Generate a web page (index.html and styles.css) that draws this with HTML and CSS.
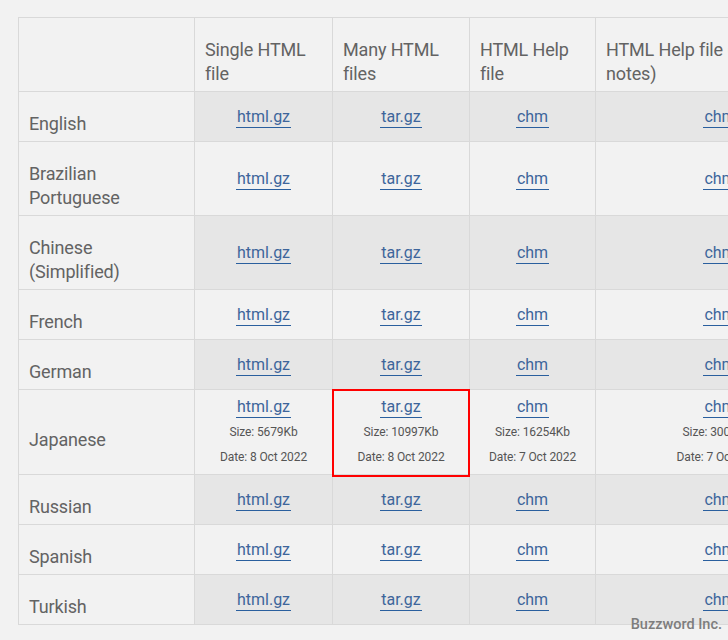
FILE: index.html
```html
<!DOCTYPE html>
<html lang="en">
<head>
<meta charset="utf-8">
<title>Documentation downloads</title>
<link rel="stylesheet" href="styles.css">
</head>
<body>
<div class="sheet">
<table class="docs">
<colgroup><col class="c-lang"><col class="c-single"><col class="c-many"><col class="c-help"><col class="c-notes"></colgroup>
<tr><th></th><th>Single HTML file</th><th>Many HTML files</th><th>HTML Help file</th><th>HTML Help file (with<br>notes)</th></tr>
<tr class="alt"><th>English</th><td><a href="#">html.gz</a></td><td><a href="#">tar.gz</a></td><td><a href="#">chm</a></td><td><a href="#">chm</a></td></tr>
<tr><th>Brazilian Portuguese</th><td><a href="#">html.gz</a></td><td><a href="#">tar.gz</a></td><td><a href="#">chm</a></td><td><a href="#">chm</a></td></tr>
<tr class="alt"><th>Chinese (Simplified)</th><td><a href="#">html.gz</a></td><td><a href="#">tar.gz</a></td><td><a href="#">chm</a></td><td><a href="#">chm</a></td></tr>
<tr><th>French</th><td><a href="#">html.gz</a></td><td><a href="#">tar.gz</a></td><td><a href="#">chm</a></td><td><a href="#">chm</a></td></tr>
<tr class="alt"><th>German</th><td><a href="#">html.gz</a></td><td><a href="#">tar.gz</a></td><td><a href="#">chm</a></td><td><a href="#">chm</a></td></tr>
<tr><th>Japanese</th>
<td><a href="#">html.gz</a><span class="meta">Size: 5679Kb</span><span class="meta">Date: 8 Oct 2022</span></td>
<td class="marked"><a href="#">tar.gz</a><span class="meta">Size: 10997Kb</span><span class="meta">Date: 8 Oct 2022</span></td>
<td><a href="#">chm</a><span class="meta">Size: 16254Kb</span><span class="meta">Date: 7 Oct 2022</span></td>
<td><a href="#">chm</a><span class="meta">Size: 30032Kb</span><span class="meta">Date: 7 Oct 2022</span></td></tr>
<tr class="alt"><th>Russian</th><td><a href="#">html.gz</a></td><td><a href="#">tar.gz</a></td><td><a href="#">chm</a></td><td><a href="#">chm</a></td></tr>
<tr><th>Spanish</th><td><a href="#">html.gz</a></td><td><a href="#">tar.gz</a></td><td><a href="#">chm</a></td><td><a href="#">chm</a></td></tr>
<tr class="alt"><th>Turkish</th><td><a href="#">html.gz</a></td><td><a href="#">tar.gz</a></td><td><a href="#">chm</a></td><td><a href="#">chm</a></td></tr>
</table>
</div>
<div class="watermark">Buzzword Inc.</div>
</body>
</html>
```
FILE: styles.css
```css
html, body { margin: 0; height: 640px; overflow: hidden; background: #f2f2f2; }
body { position: relative; width: 728px; font-family: Roboto, "Noto Sans", sans-serif; color: #636363; }
.sheet { padding: 17px 0 0 18px; width: 900px; }
.docs { border-collapse: collapse; table-layout: fixed; width: 826px; font-size: 18px; line-height: 24px; }
.c-lang { width: 176px; }
.c-single { width: 138px; }
.c-many { width: 137px; }
.c-help { width: 126px; }
.c-notes { width: 249px; }
.docs th, .docs td { border: 1px solid #d9d9d9; }
.docs th { padding: 20px 10px 5px; font-weight: 400; text-align: left; letter-spacing: -.15px; }
.docs td { padding: 5px 4px; font-size: 16px; text-align: center; vertical-align: middle; position: relative; }
.alt td { background: #e6e6e6; }
.docs a { color: #3d659b; text-decoration: none; border-bottom: 1px solid #2a5f9e; padding: 0 1px 1px; }
.meta { display: block; height: 25px; font-size: 12px; line-height: 27px; letter-spacing: -.1px; color: #555; }
.marked::after { content: ""; position: absolute; z-index: 1; inset: -1px -1px -3px -1px; border: 2px solid #f00; }
.watermark { position: absolute; right: 6px; bottom: 5px; font-size: 14.5px; line-height: 20px; font-weight: 500; color: #7d7d7d; }
```
